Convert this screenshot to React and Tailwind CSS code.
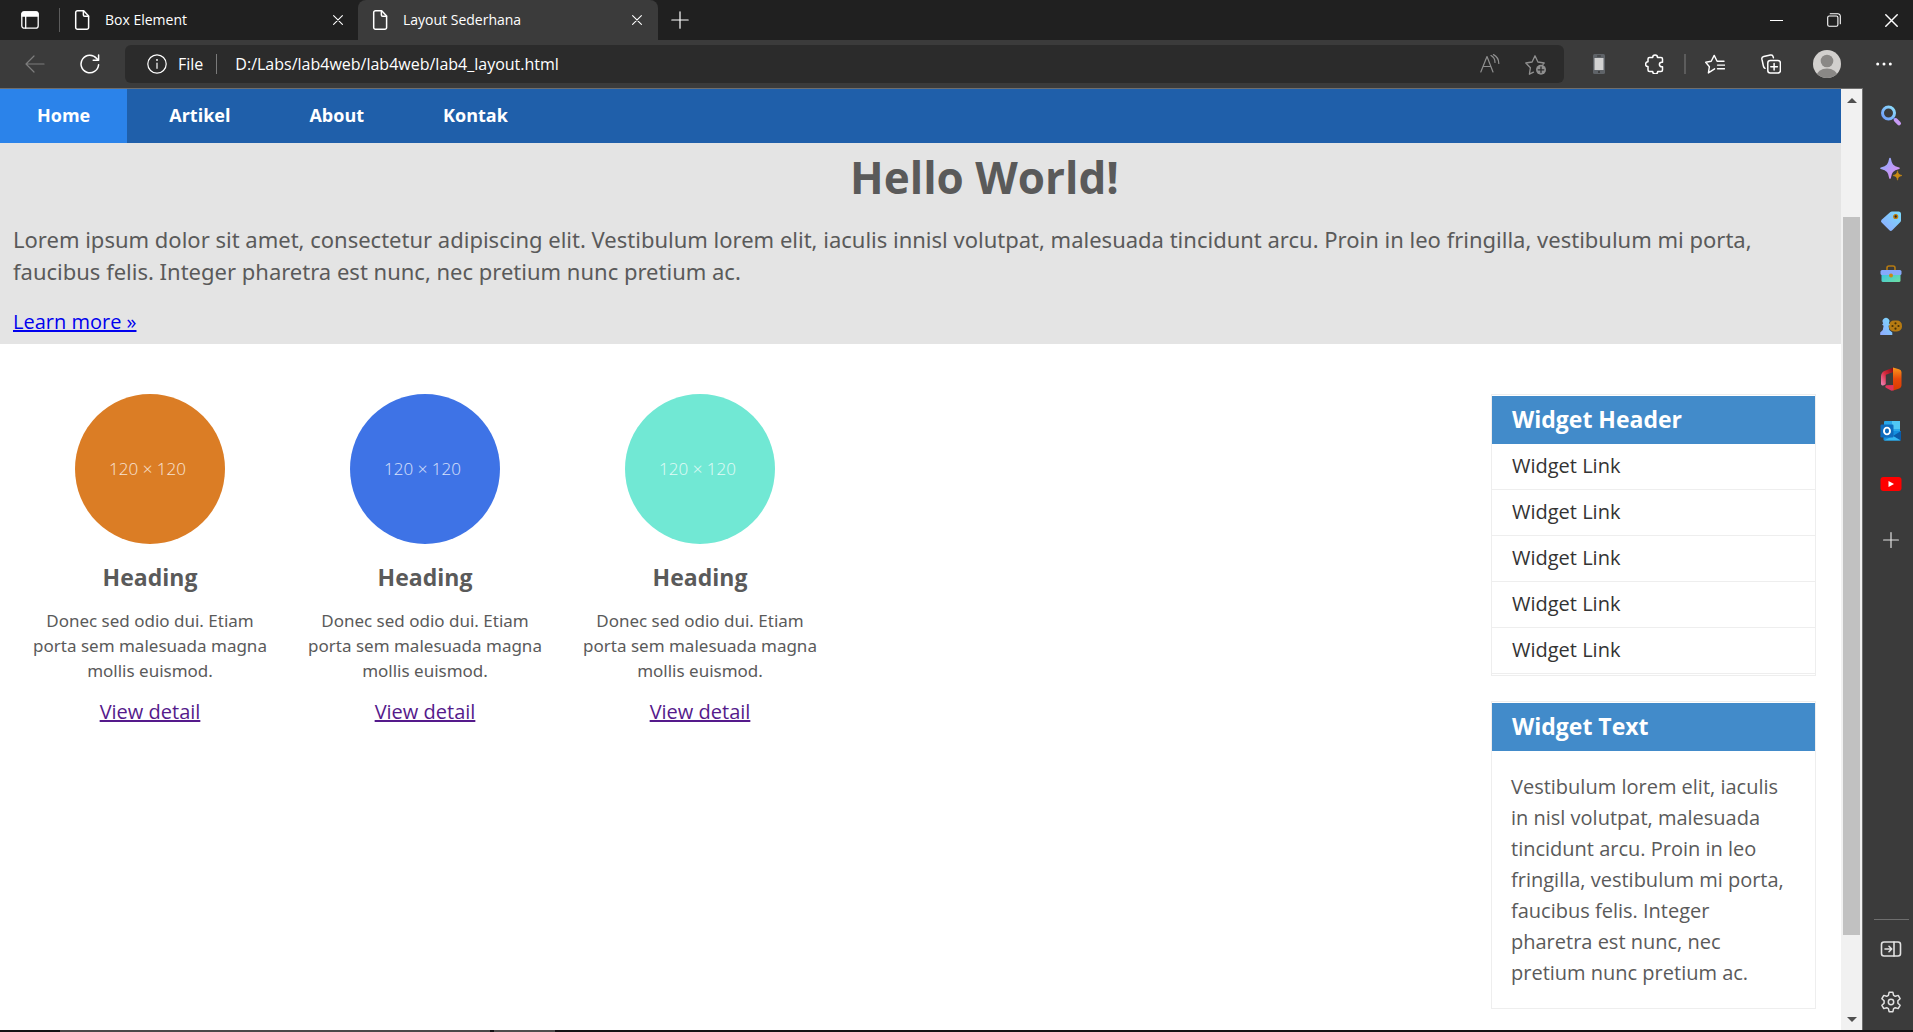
import React from "react";

function Svg({ size = 20, box = 20, sw = 1.2, className = "", children }) {
  return (
    <svg
      width={size}
      height={size}
      viewBox={`0 0 ${box} ${box}`}
      fill="none"
      stroke="currentColor"
      strokeWidth={sw}
      strokeLinecap="round"
      strokeLinejoin="round"
      aria-hidden="true"
      className={`shrink-0 ${className}`}
    >
      {children}
    </svg>
  );
}

const PageIcon = () => (
  <Svg sw={1.5}>
    <path d="M4.5 0.8h6.2L15.6 6v11.4a1.8 1.8 0 0 1-1.8 1.8H4.5a1.8 1.8 0 0 1-1.8-1.8V2.6A1.8 1.8 0 0 1 4.5 0.8z" />
    <path d="M10.4 1v4a1.3 1.3 0 0 0 1.3 1.3h3.8" />
  </Svg>
);

const CloseIcon = ({ size = 10 }) => (
  <Svg size={size} box={10} sw={1.1}>
    <path d="M0.6 0.6l8.8 8.8M9.4 0.6L0.6 9.4" />
  </Svg>
);

function TopButton({ label, className, children }) {
  return (
    <button type="button" aria-label={label} className={`flex shrink-0 items-center justify-center ${className}`}>
      {children}
    </button>
  );
}

function TabBar() {
  return (
    <div className="flex h-10 shrink-0 bg-[#202020] text-white">
      <TopButton label="Tab actions" className="w-[59px]">
        <Svg size={18} box={18} sw={1.3}>
          <rect x="0.8" y="0.8" width="16.4" height="16.4" rx="2.5" />
          <path d="M1 2.8A2 2 0 0 1 3 1h12a2 2 0 0 1 2 1.8V5H1z" fill="currentColor" />
          <path d="M4.7 5v12" />
        </Svg>
      </TopButton>
      <div className="my-2 w-px bg-[#5c5c5c]" />
      <div role="tablist" className="flex">
        <div className="flex w-[298px] items-center pl-[13px]">
          <button type="button" role="tab" aria-selected="false" className="flex flex-1 items-center gap-3 text-left text-sm">
            <PageIcon />
            Box Element
          </button>
          <TopButton label="Close Box Element" className="h-6 w-10">
            <CloseIcon />
          </TopButton>
        </div>
        <div className="flex w-[300px] items-center rounded-t-lg bg-[#3b3b3b] pl-[13px]">
          <button type="button" role="tab" aria-selected="true" className="flex flex-1 items-center gap-3 text-left text-sm">
            <PageIcon />
            Layout Sederhana
          </button>
          <TopButton label="Close Layout Sederhana" className="h-6 w-[42px]">
            <CloseIcon />
          </TopButton>
        </div>
      </div>
      <TopButton label="New tab" className="w-11">
        <Svg size={18} box={18}>
          <path d="M9 0.8v16.4M0.8 9h16.4" />
        </Svg>
      </TopButton>
      <div className="ml-auto flex">
        <TopButton label="Minimize" className="w-[57px]">
          <Svg size={13} box={13}>
            <path d="M0 6.5h13" />
          </Svg>
        </TopButton>
        <TopButton label="Restore" className="w-[57px]">
          <Svg size={14} box={14} sw={1.1}>
            <rect x="0.7" y="3" width="10.2" height="10.2" rx="1.5" />
            <path d="M3.2 0.7h7.6a2.5 2.5 0 0 1 2.5 2.5v7.6" />
          </Svg>
        </TopButton>
        <TopButton label="Close window" className="mr-[-7px] w-[58px]">
          <CloseIcon size={13} />
        </TopButton>
      </div>
    </div>
  );
}

function Toolbar() {
  return (
    <div className="flex h-12 shrink-0 items-center bg-[#3b3b3b] text-white">
      <TopButton label="Back" className="h-10 w-[70px] text-[#7d7d7d]">
        <Svg>
          <path d="M19 10H1M9 2L1 10l8 8" />
        </Svg>
      </TopButton>
      <TopButton label="Refresh" className="mr-[15px] h-10 w-10">
        <Svg sw={1.5}>
          <path d="M18.6 10.8A8.8 8.8 0 1 1 16.7 4.5L18.5 6.200M18.6 1v5.3h-5.4" />
        </Svg>
      </TopButton>
      <div className="flex h-[38px] min-w-0 flex-1 items-center rounded-md bg-[#2b2b2b] pr-[5px] pl-[22px]">
        <Svg>
          <circle cx="10" cy="10" r="9.2" />
          <path d="M10 9v5.3" />
          <path d="M10 5.8v.2" strokeWidth="1.8" />
        </Svg>
        <span className="ml-[11px] text-base">File</span>
        <div className="mr-[18px] ml-[13px] h-5 w-px bg-[#7a7a7a]" />
        <input
          type="text"
          aria-label="Address"
          defaultValue="D:/Labs/lab4web/lab4web/lab4_layout.html"
          className="min-w-0 flex-1 bg-transparent text-base text-white outline-none"
        />
        <TopButton label="Read aloud" className="h-8 w-[46px] text-[#8f8f8f]">
          <Svg>
            <path d="M0.8 18L7 2.5 13 18M3 12.5h8" />
            <path d="M11 1.6a8 8 0 0 1 4 6.8M13.5 0.6a10 10 0 0 1 5.3 8.8" />
          </Svg>
        </TopButton>
        <TopButton label="Add to favorites" className="h-8 w-[46px] text-[#8f8f8f]">
          <Svg size={22} box={22} sw={1.3}>
            <path d="M8.5 19.2l-4.1 2 1-6.5L0.8 10l6.3-1L10 2.8l2.9 6.200 6.3 1-1.2 1.2" />
            <circle cx="16" cy="16.8" r="5" fill="currentColor" stroke="none" />
            <path d="M16 14v5.6M13.2 16.8h5.6" stroke="#2b2b2b" />
          </Svg>
        </TopButton>
      </div>
      <TopButton label="Mobile view extension" className="ml-[7px] h-10 w-14">
        <svg width="12" height="20" viewBox="0 0 12 20" aria-hidden="true">
          <rect width="12" height="20" rx="1.5" fill="#5f6368" />
          <rect x="1.5" y="4" width="9" height="12" fill="#d2d2d2" />
          <rect x="4" y="1.6" width="4" height="1" rx="0.5" fill="#333" />
          <circle cx="6" cy="18" r="1" fill="#333" />
        </svg>
      </TopButton>
      <TopButton label="Extensions" className="h-10 w-14">
        <Svg sw={1.5}>
          <path d="M4.5 3.5h3.2a2.400 2.400 0 0 1 4.8 0H16a1.5 1.5 0 0 1 1.5 1.5v3.2h-.8a2.3 2.3 0 0 0 0 4.6h.8V16a1.5 1.5 0 0 1-1.5 1.5h-3.3a2.5 2.5 0 0 1-5 0H4.5A1.5 1.5 0 0 1 3 16v-3.4a2.4 2.4 0 0 1 0-4.8V5a1.5 1.5 0 0 1 1.5-1.5z" />
        </Svg>
      </TopButton>
      <div className="mx-px h-5 w-[2px] bg-[#5c5c5c]" />
      <TopButton label="Favorites" className="h-10 w-14">
        <Svg sw={1.4}>
          <path d="M9.6 14.8L3.4 18.9l1-6.2L0.7 8.3l5.5-1L9.2 1.4l2.9 5.9h6.9M12.5 11.1h7M12.5 14.8h7" />
        </Svg>
      </TopButton>
      <TopButton label="Collections" className="h-10 w-14">
        <Svg sw={1.5}>
          <rect x="6.8" y="6.5" width="12.6" height="12.6" rx="2.5" />
          <path d="M13.1 9.5v6.6M9.8 12.8h6.6" />
          <path d="M4 14.3C3 13.8 2.6 13 2.4 12L.9 5.2A2.4 2.4 0 0 1 2.7 2.4L9.4 1a2.4 2.4 0 0 1 2.8 1.8l.2.9" />
        </Svg>
      </TopButton>
      <TopButton label="Profile" className="h-10 w-14">
        <svg width="28" height="28" viewBox="0 0 28 28" aria-hidden="true">
          <clipPath id="avatar">
            <circle cx="14" cy="14" r="14" />
          </clipPath>
          <g clipPath="url(#avatar)">
            <rect width="28" height="28" fill="#d2d0ce" />
            <circle cx="14" cy="11" r="6.3" fill="#8a8886" />
            <ellipse cx="14" cy="26" rx="10.5" ry="7.5" fill="#8a8886" />
          </g>
        </svg>
      </TopButton>
      <TopButton label="Settings and more" className="h-10 w-[58px]">
        <svg width="16" height="4" viewBox="0 0 16 4" fill="currentColor" aria-hidden="true">
          <circle cx="1.7" cy="2" r="1.5" />
          <circle cx="8" cy="2" r="1.5" />
          <circle cx="14.3" cy="2" r="1.5" />
        </svg>
      </TopButton>
    </div>
  );
}

function SideButton({ label, className = "h-[53px]", children }) {
  return (
    <button type="button" aria-label={label} className={`flex shrink-0 items-center justify-center text-[#e2e2e2] ${className}`}>
      {children}
    </button>
  );
}

function Pic({ children }) {
  return (
    <svg width="22" height="24" viewBox="0 0 22 24" aria-hidden="true">
      {children}
    </svg>
  );
}

function Sidebar() {
  return (
    <aside aria-label="Browser sidebar" className="flex w-[50px] shrink-0 flex-col bg-[#3b3b3b] pb-[2px] pl-[5px]">
      <svg width="0" height="0" className="absolute" aria-hidden="true">
        <defs>
          <linearGradient id="blue" x1="0" y1="1" x2="1" y2="0">
            <stop offset="0" stopColor="#8fa8ff" />
            <stop offset="1" stopColor="#7adcfb" />
          </linearGradient>
          <linearGradient id="ring" x1="0" y1="1" x2="1" y2="0">
            <stop offset="0" stopColor="#6f9bfa" />
            <stop offset="1" stopColor="#8fe0fd" />
          </linearGradient>
          <linearGradient id="violet" x1="0" y1="0" x2="1" y2="1">
            <stop offset="0" stopColor="#7fb4ff" />
            <stop offset="0.5" stopColor="#b99bf8" />
            <stop offset="1" stopColor="#e08cf0" />
          </linearGradient>
          <linearGradient id="teal" x1="0" y1="0" x2="1" y2="1">
            <stop offset="0" stopColor="#35c1e8" />
            <stop offset="1" stopColor="#6fe0a0" />
          </linearGradient>
          <linearGradient id="officeLeft" x1="0" y1="1" x2="1" y2="0">
            <stop offset="0" stopColor="#f08ac0" />
            <stop offset="0.5" stopColor="#d8283c" />
            <stop offset="1" stopColor="#7c0a10" />
          </linearGradient>
          <linearGradient id="officeRight" x1="0" y1="0" x2="0" y2="1">
            <stop offset="0" stopColor="#f99a1c" />
            <stop offset="0.5" stopColor="#e8490a" />
            <stop offset="1" stopColor="#d83b01" />
          </linearGradient>
        </defs>
      </svg>
      <SideButton label="Search" className="h-[54px]">
        <Pic>
          <circle cx="8.5" cy="10" r="6" fill="none" stroke="url(#ring)" strokeWidth="3" />
          <path d="M13.5 15l2 2" stroke="#5f7fd8" strokeWidth="2" />
          <path d="M15.8 17.2l3.2 3.2" stroke="#c79af5" strokeWidth="4" strokeLinecap="round" />
        </Pic>
      </SideButton>
      <SideButton label="Discover">
        <Pic>
          <path d="M10 1.5c1 6 2.5 8 9 9.8-6.5 1.7-8 3.7-9 9.7-1-6-2.5-8-9-9.7 6.5-1.8 8-3.8 9-9.8z" fill="url(#violet)" stroke="url(#violet)" strokeWidth="1.6" strokeLinejoin="round" />
          <path d="M17.5 13.8c.5 3 1.3 4 4.5 4.7-3.200.8-4 1.7-4.5 4.7-.5-3-1.3-3.9-4.5-4.7 3.200-.7 4-1.7 4.5-4.7z" fill="#c98a14" stroke="#c98a14" strokeWidth="0.6" />
        </Pic>
      </SideButton>
      <SideButton label="Shopping" className="h-[52px]">
        <Pic>
          <path d="M12 2.500h6.500a2.500 2.500 0 0 1 2.500 2.500v6.500a2 2 0 0 1-.6 1.500l-8.200 8.200a2 2 0 0 1-2.800 0l-7.800-7.700a2 2 0 0 1 0-2.800l8.800-7.600a2 2 0 0 1 1.600-.6z" fill="url(#blue)" />
          <circle cx="15.7" cy="7.5" r="1.9" fill="#2b2b2b" stroke="#c4810c" strokeWidth="1.4" />
        </Pic>
      </SideButton>
      <SideButton label="Tools">
        <Pic>
          <path d="M7 8V6a2 2 0 0 1 2-2h4a2 2 0 0 1 2 2v2" fill="none" stroke="#b57a12" strokeWidth="1.6" />
          <path d="M1.5 11h19v7.5a1.5 1.5 0 0 1-1.5 1.5H3a1.5 1.5 0 0 1-1.5-1.5z" fill="url(#teal)" />
          <rect x="0.5" y="8" width="21" height="5" rx="1.5" fill="#86a9fb" />
          <circle cx="11" cy="13.5" r="2" fill="#c98a14" />
        </Pic>
      </SideButton>
      <SideButton label="Games" className="h-[52px]">
        <Pic>
          <rect x="9" y="6.5" width="13" height="11" rx="5" fill="#b57a12" />
          <circle cx="15.5" cy="9.3" r="1.1" fill="#463108" />
          <circle cx="15.5" cy="14.7" r="1.1" fill="#463108" />
          <circle cx="12.5" cy="12" r="1.1" fill="#463108" />
          <circle cx="18.5" cy="12" r="1.1" fill="#463108" />
          <path d="M3.200 9.300a3.400 3.400 0 1 1 5.600 0l1.200 1.500-1.500 1 .8 4.200 3 2.500v2.500H.2v-2.500l2.600-2.500.8-4.200-1.500-1z" fill="url(#blue)" />
        </Pic>
      </SideButton>
      <SideButton label="Office">
        <Pic>
          <path d="M13.5 0.5L5 3.8A6 6 0 0 0 1 9v7.5c0 2.5 2.5 2.5 4 1.3l.8-.8V7.8L13.5 5z" fill="url(#officeLeft)" />
          <path d="M13 0.5l6 1.7A3 3 0 0 1 21.5 5v13.5a3 3 0 0 1-2.2 2.900L13 23.5z" fill="url(#officeRight)" />
          <path d="M6.5 18.3l7-.3v5.5l-2 .3-5.600-3c-1.200-.8-.5-2.300.6-2.500z" fill="#e0345c" />
        </Pic>
      </SideButton>
      <SideButton label="Outlook" className="h-[52px]">
        <Pic>
          <rect x="4" y="2" width="16" height="11" rx="1" fill="#28a8ea" />
          <rect x="12" y="2" width="8" height="8" fill="#50c8f5" />
          <path d="M3.5 12H21v8.5a1 1 0 0 1-1 1H4.5a1 1 0 0 1-1-1z" fill="#1490df" />
          <path d="M21 12l-8 5 8 4.5z" fill="#0a5ba8" />
          <path d="M4 21.5L13 17l7.5 4.500z" fill="#35b8f1" />
          <rect x="0.5" y="5.5" width="13" height="13" rx="1.2" fill="#0f6cbd" />
          <ellipse cx="7" cy="12" rx="3" ry="3.4" fill="none" stroke="#fff" strokeWidth="1.9" />
        </Pic>
      </SideButton>
      <SideButton label="YouTube">
        <Pic>
          <rect x="0.5" y="5" width="21" height="14" rx="3" fill="#f00" />
          <path d="M8.500 9l5.500 3-5.500 3z" fill="#fff" />
        </Pic>
      </SideButton>
      <SideButton label="Add" className="h-[60px]">
        <Svg size={16} box={16}>
          <path d="M8 0.6v14.8M0.6 8h14.8" />
        </Svg>
      </SideButton>
      <div className="mr-1 mb-[2px] ml-[6px] mt-auto h-px shrink-0 bg-[#6e6e6e]" />
      <SideButton label="Hide sidebar">
        <Svg size={22} box={22} sw={1.6}>
          <rect x="1.5" y="4" width="19" height="14" rx="2.5" />
          <path d="M14 4v14M5 11h6.5M9 8.3l2.7 2.7L9 13.7" />
        </Svg>
      </SideButton>
      <SideButton label="Settings">
        <Svg size={22} box={22} sw={1.5}>
          <path d="M9.1 1.3h3.8l.7 3 1.7 1 2.9-.9 1.9 3.3-2.2 2.1v2.4l2.2 2.1-1.9 3.3-2.9-.9-1.7 1-.7 3H9.1l-.7-3-1.7-1-2.9.9-1.9-3.3 2.2-2.1V9.8L1.9 7.7l1.9-3.3 2.9.9 1.7-1z" />
          <circle cx="11" cy="11" r="2.7" />
        </Svg>
      </SideButton>
    </aside>
  );
}

function Scrollbar() {
  return (
    <div aria-hidden="true" className="flex w-[21px] shrink-0 flex-col items-center bg-[#f1f1f1] px-[2px]">
      <div className="flex h-[23px] shrink-0 items-center">
        <div className="border-x-[5px] border-b-[5px] border-x-transparent border-b-[#505050]" />
      </div>
      <div className="grow-[105]" />
      <div className="w-full grow-[718] bg-[#c1c1c1]" />
      <div className="grow-[74]" />
      <div className="flex h-[21px] shrink-0 items-center">
        <div className="border-x-[5px] border-t-[5px] border-x-transparent border-t-[#505050]" />
      </div>
    </div>
  );
}

const MENU = ["Home", "Artikel", "About", "Kontak"];
const CARD_COLORS = ["bg-[#db7d25]", "bg-[#3e73e6]", "bg-[#71e8d4]"];

function WebPage() {
  return (
    <div className="min-w-0 flex-1 overflow-hidden bg-white text-[#5a5a5a]">
      <nav className="flex gap-[5px] bg-[#1f5faa]">
        {MENU.map((item) => (
          <a
            key={item}
            href="#"
            className={`px-[37px] pt-3 pb-[14px] text-lg leading-7 font-bold text-white ${item === "Home" ? "bg-[#2b83ea]" : ""}`}
          >
            {item}
          </a>
        ))}
      </nav>

      <section className="bg-[#e4e4e4] px-[13px] pt-[10px] pb-2">
        <h1 className="mb-[22px] pl-32 text-center text-[44px] leading-[48px] font-bold">Hello World!</h1>
        <p className="mb-[21px] font-['Noto_Sans','Open_Sans',sans-serif] text-[22px] leading-8">
          Lorem ipsum dolor sit amet, consectetur adipiscing elit. Vestibulum lorem elit, iaculis innisl volutpat, malesuada
          tincidunt arcu. Proin in leo fringilla, vestibulum mi porta, faucibus felis. Integer pharetra est nunc, nec pretium
          nunc pretium ac.
        </p>
        <a href="#" className="block w-fit text-xl leading-7 text-[#0000ee] underline">
          Learn more »
        </a>
      </section>

      <div className="flex items-start justify-between px-[25px] pt-[50px]">
        <main className="flex gap-[25px]">
          {CARD_COLORS.map((color) => (
            <article key={color} className="flex w-[250px] flex-col items-center text-center">
              <div className={`flex size-[150px] items-center justify-center rounded-full pr-[5px] text-[17px] font-light text-white/80 ${color}`}>
                120 × 120
              </div>
              <h3 className="mt-[17px] text-[23px] leading-8 font-bold">Heading</h3>
              <p className="my-[15px] font-['Noto_Sans','Open_Sans',sans-serif] text-[17px] leading-[25px]">
                Donec sed odio dui. Etiam porta sem malesuada magna mollis euismod.
              </p>
              <a href="#" className="text-xl leading-7 text-[#551a8b] underline">
                View detail
              </a>
            </article>
          ))}
        </main>

        <aside className="flex w-[325px] flex-col gap-[25px]">
          <section className="border border-[#eee] py-px">
            <h3 className="bg-[#428bca] px-5 pb-[2px] text-[23px] leading-[46px] font-bold text-white">Widget Header</h3>
            <ul>
              {[1, 2, 3, 4, 5].map((n) => (
                <li key={n} className="border-b border-[#eee]">
                  <a href="#" className="block px-5 pt-2 pb-[9px] text-xl leading-7 text-[#333]">
                    Widget Link
                  </a>
                </li>
              ))}
            </ul>
          </section>
          <section className="border border-[#eee] pt-px">
            <h3 className="bg-[#428bca] px-5 pb-[2px] text-[23px] leading-[46px] font-bold text-white">Widget Text</h3>
            <p className="py-5 pr-[26px] pl-[19px] text-xl leading-[31px]">
              Vestibulum lorem elit, iaculis in nisl volutpat, malesuada tincidunt arcu. Proin in leo fringilla, vestibulum mi
              porta, faucibus felis. Integer pharetra est nunc, nec pretium nunc pretium ac.
            </p>
          </section>
        </aside>
      </div>
    </div>
  );
}

export default function App() {
  return (
    <div className="flex h-screen flex-col overflow-hidden bg-[#3b3b3b] font-['Open_Sans',sans-serif]">
      <TabBar />
      <Toolbar />
      <div className="flex min-h-0 flex-1">
        <div className="flex min-w-0 flex-1 border-t border-r border-[#6e6e6e]">
          <WebPage />
          <Scrollbar />
        </div>
        <Sidebar />
      </div>
      <div className="flex h-[2px] shrink-0 bg-[#141114] pl-[60px]">
        <div className="w-[430px] bg-[#4a4848]" />
        <div className="ml-1 w-[61px] bg-[#4f4d4d]" />
      </div>
    </div>
  );
}
